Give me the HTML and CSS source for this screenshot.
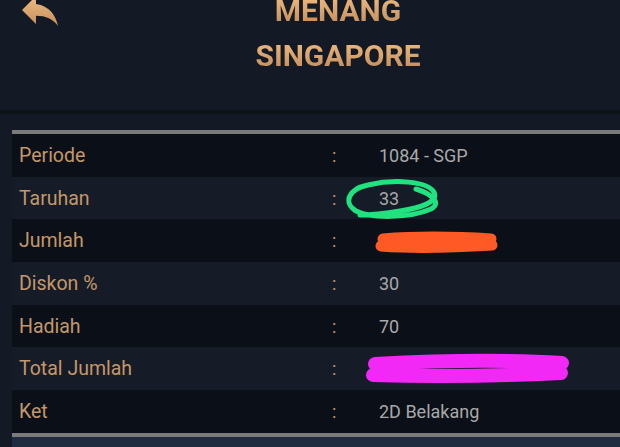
FILE: index.html
```html
<!DOCTYPE html>
<html lang="id">
<head>
  <meta charset="UTF-8">
  <meta name="viewport" content="width=device-width, initial-scale=1.0">
  <title>Menang Singapore</title>
  <link rel="stylesheet" href="styles.css">
</head>
<body>
  <div class="page">
    <header class="header">
      <button class="back" aria-label="Kembali">
        <svg width="48" height="48" viewBox="0 0 24 24">
          <defs>
            <linearGradient id="gold" x1="0" y1="0" x2="0" y2="1">
              <stop offset="0" stop-color="#f0bd84"/>
              <stop offset="1" stop-color="#c48e5c"/>
            </linearGradient>
          </defs>
          <path fill="url(#gold)" d="M10 9V5l-7 7 7 7v-4.1c5 0 8.5 1.6 11 5.1-1-5-4-10-11-11z"/>
        </svg>
      </button>
      <div class="title">
        <div>MENANG</div>
        <div>SINGAPORE</div>
      </div>
    </header>

    <div class="detail">
      <div class="row">
        <span class="label">Periode</span><span class="colon">:</span><span class="value">1084 - SGP</span>
      </div>
      <div class="row">
        <span class="label">Taruhan</span><span class="colon">:</span><span class="value">33</span>
      </div>
      <div class="row">
        <span class="label">Jumlah</span><span class="colon">:</span><span class="value"></span>
      </div>
      <div class="row">
        <span class="label">Diskon %</span><span class="colon">:</span><span class="value">30</span>
      </div>
      <div class="row">
        <span class="label">Hadiah</span><span class="colon">:</span><span class="value">70</span>
      </div>
      <div class="row">
        <span class="label">Total Jumlah</span><span class="colon">:</span><span class="value"></span>
      </div>
      <div class="row">
        <span class="label">Ket</span><span class="colon">:</span><span class="value">2D Belakang</span>
      </div>
    </div>

    <div class="footer"></div>

    <!-- coretan di atas screenshot -->
    <svg class="marks" width="620" height="447" viewBox="0 0 620 447">
      <path d="M416 189 C432 194 442 203 431 209 C410 218 372 219 356 211 C343 203 348 189 368 185 C394 179 427 181 434 192 C439 202 420 208 400 211 C382 214 366 215 360 215"
            fill="none" stroke="#20e27f" stroke-width="5" stroke-linecap="round"/>
      <path d="M383 239 C420 236 460 237 491 239 M381 246 C420 249 460 247 492 245"
            fill="none" stroke="#ff5a26" stroke-width="11" stroke-linecap="round"/>
      <path d="M375 364 C430 361 500 359 562 363 M373 375 C440 377 500 376 561 373"
            fill="none" stroke="#f229f6" stroke-width="14" stroke-linecap="round"/>
    </svg>
  </div>
</body>
</html>
```

FILE: styles.css
```css
body {
  margin: 0;
  background: #131a25;
  font-family: 'Roboto', 'Liberation Sans', sans-serif;
  overflow: hidden;
}
.page {
  position: relative;
  height: 447px;
  display: flex;
  flex-direction: column;
}
.header {
  display: flex;
  height: 110px;
  border-bottom: 4px solid #0d1219;
  margin-bottom: 16px;
}
.back {
  width: 56px;
  height: 48px;
  padding: 0 0 0 16px;
  margin-top: -14px;
  border: none;
  background: none;
  text-align: left;
}
.back svg {
  display: block;
}
.title {
  flex: 1;
  text-align: center;
  margin-top: -12px;
  font-size: 30px;
  font-weight: 700;
  line-height: 45px;
}
.title div {
  background: linear-gradient(180deg, #eeb87d 20%, #bf8b5b 85%);
  -webkit-background-clip: text;
  background-clip: text;
  color: transparent;
  display: block;
  width: max-content;
  margin: 0 auto;
}
.detail {
  margin-left: 12px;
  border-top: 4px solid #7b7b7b;
  border-bottom: 4px solid #7b7b7b;
}
.row {
  display: grid;
  grid-template-columns: 313px 47px 1fr;
  align-items: center;
  height: 42.7px;
  padding-left: 7px;
  background: #151c27;
}
.row:nth-child(odd) {
  background: #0b1018;
}
.label {
  font-size: 19.5px;
  color: #c4976a;
}
.colon {
  font-size: 18px;
  color: #c4976a;
}
.value {
  font-size: 18px;
  color: #a8a8a8;
}
.footer {
  flex: 1;
  margin-left: 12px;
  background: #1f2c40;
}
.marks {
  position: absolute;
  top: 0;
  left: 0;
  pointer-events: none;
}
```
